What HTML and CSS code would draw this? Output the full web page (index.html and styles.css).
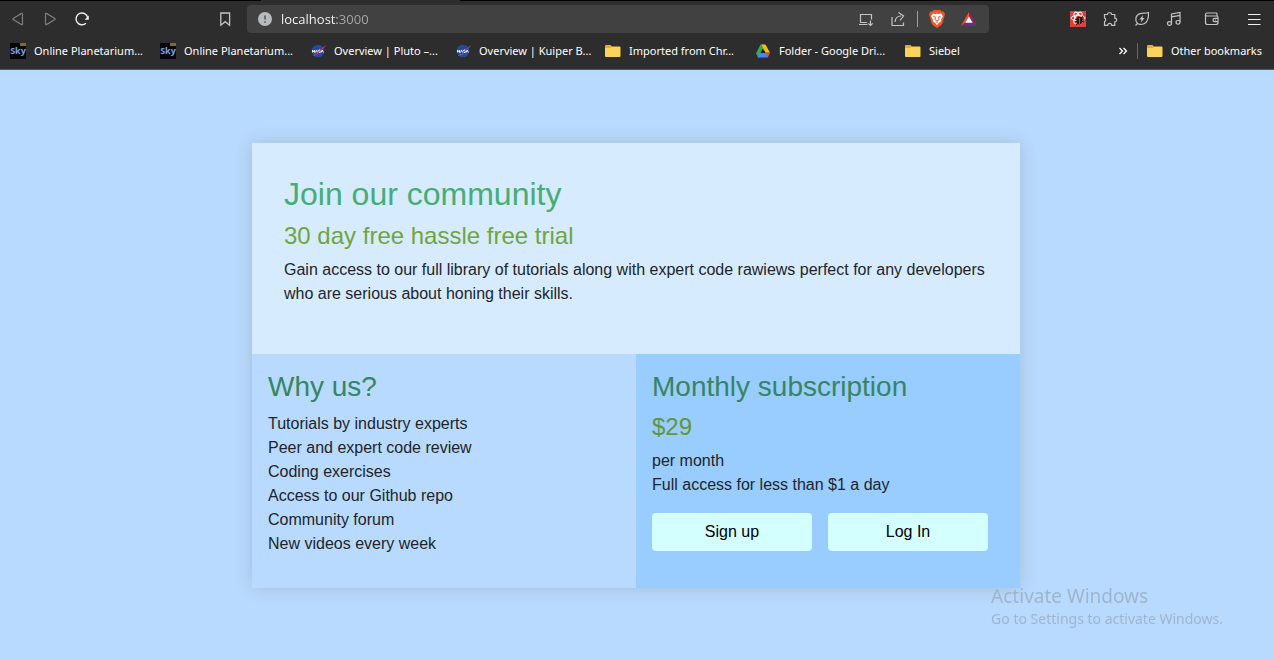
FILE: index.html
```html
<!DOCTYPE html>
<html lang="en">
<head>
<meta charset="utf-8">
<meta name="viewport" content="width=device-width, initial-scale=1">
<title>Join our community</title>
<link rel="stylesheet" href="styles.css">
</head>
<body>
<header class="browser">
  <div class="tab-edge"></div>
  <div class="toolbar">
    <button class="tool dim" aria-label="Back"><svg width="16" height="16" viewBox="0 0 16 16"><path d="M12.500 3v10q0 1-1 .6L3.200 8.600q-.8-.6 0-1.200l8.300-5q1-.4 1 .6z"/></svg></button>
    <button class="tool dim" aria-label="Forward"><svg width="16" height="16" viewBox="0 0 16 16"><path d="M3.500 3v10q0 1 1 .6l8.300-5q.8-.6 0-1.200l-8.300-5q-1-.4-1 .6z"/></svg></button>
    <button class="tool bright" aria-label="Reload"><svg width="16" height="16" viewBox="0 0 16 16"><path stroke-width="1.400" d="M12 12.200A5.900 5.900 0 1 1 13.700 6.500"/><path class="solid" d="M14.800 4.500v4.200H10.600z"/></svg></button>
    <button class="tool save" aria-label="Bookmark this page"><svg width="16" height="16" viewBox="0 0 16 16"><path stroke-width="1.300" d="M3.800 2h8.800v12.200L8.200 10.700l-4.400 3.500z"/></svg></button>
    <form class="address">
      <svg width="14" height="14" viewBox="0 0 14 14"><circle cx="7" cy="7" r="7" fill="#b9babd"/><path d="M7 3.500v4M7 9.200v1.600" stroke="#55585c" stroke-width="1.600"/></svg>
      <input class="url" type="text" value="localhost:3000" aria-label="Address">
      <button type="button" class="tool" aria-label="Install"><svg width="16" height="16" viewBox="0 0 16 16"><path d="M9 11.500H2.500V3.500h11v5M1 13.500h8.500M12.500 9.500v5M10.300 12.300l2.200 2.200 2.200-2.200"/></svg></button>
      <button type="button" class="tool" aria-label="Share"><svg width="16" height="16" viewBox="0 0 16 16"><path d="M2 6v8.500h11.500v-3M5 11c.3-4 2-6 6-6M8.500 1.500L13.500 5 10 9.500"/></svg></button>
      <span class="rule"></span>
      <button type="button" class="tool" aria-label="Brave Shields"><svg width="16" height="18" viewBox="0 0 16 18"><path fill="#f1562b" stroke="none" d="M4.700 0h6.600l1.500 1.500 1.700-.1L16 4l-.6 2.200-2 7.400Q12.500 15.500 8 18q-4.500-2.500-5.400-4.400L.6 6.200 0 4l1.500-2.600 1.700.1z"/><path fill="#fff" stroke="none" d="M4 3.500l2.500.5L8 3.500l1.500.5 2.500-.5 2 2.700-2 3.500.2 1.600-2.500 1.700L8 15.300l-1.700-2.300-2.500-1.700.2-1.600-2-3.500z"/><path fill="none" stroke="#f1562b" stroke-width="1" d="M4.200 6.300l2.500.9-.8 2.400L8 11l2.100-1.400-.8-2.400 2.500-.9M8 11v2"/></svg></button>
      <button type="button" class="tool" aria-label="Brave Rewards"><svg width="16" height="14" viewBox="0 0 16 14"><path fill="#fb542b" stroke="none" d="M8 0v5L4.500 10.500 0 14z"/><path fill="#9e1f63" stroke="none" d="M8 0l8 14-4.500-3.500L8 5z"/><path fill="#662d91" stroke="none" d="M0 14l4.500-3.500h7L16 14z"/><path fill="#fff" stroke="none" d="M8 4.500l3.700 6.200H4.300z"/></svg></button>
    </form>
    <div class="extensions">
      <button class="tool" aria-label="React extension"><svg width="16" height="16" viewBox="0 0 16 16"><path fill="#df4138" stroke="none" d="M0 0h16v16H0z"/><g fill="none" stroke="#fff" stroke-width="1"><ellipse cx="8" cy="7" rx="7" ry="2.600"/><ellipse cx="8" cy="7" rx="6.500" ry="2.600" transform="rotate(60 8 7)"/><ellipse cx="8" cy="7" rx="6.500" ry="2.600" transform="rotate(120 8 7)"/></g><ellipse cx="9.500" cy="9.500" rx="3" ry="4" fill="#2b1516" stroke="none"/><path stroke="#2b1516" d="M5 8l9 3M5 11l9-3M6 14l7-9"/><path stroke="#df4138" d="M9.500 7v6"/></svg></button>
      <button class="tool" aria-label="Extensions"><svg width="16" height="16" viewBox="0 0 16 16"><path d="M2.500 3.500h3a2 2 0 1 1 4 0h3.300v3.600a1.800 1.800 0 1 1 0 3.700v3.500H9.700a2 2 0 0 0-4 0H2.500v-3.700a2 2 0 0 0 0-3.700z"/></svg></button>
      <button class="tool" aria-label="Energy saver"><svg width="16" height="16" viewBox="0 0 16 16"><path d="M1.500 14.500l2-2C.5 9 1.500 4 6 2.700c3-.9 5.500 0 8.500-1.200.2 5-.2 9.500-4.500 11.300-2.500 1-4.700.8-6.500-.3"/><path class="solid" d="M9 4L5.500 8.500h2L7 11.500 10.500 7h-2z"/></svg></button>
      <button class="tool" aria-label="Media"><svg width="16" height="16" viewBox="0 0 16 16"><path d="M5.500 12.500V3l8.500-1.500v9.500M5.500 5.800L14 4.300"/><ellipse cx="3.500" cy="12.500" rx="2" ry="1.800"/><ellipse cx="12" cy="11.300" rx="2" ry="1.800"/></svg></button>
      <button class="tool wallet" aria-label="Wallet"><svg width="16" height="16" viewBox="0 0 16 16"><path d="M13 5V3q0-1-1-1H3Q1.500 2 1.500 3.500v8Q1.500 13.500 3.500 13.500H12q2 0 2-2v-5Q14 5 12.500 5H3Q1.500 5 1.500 3.500M14 7.300h-3.500Q9 7.300 9 9t1.500 1.700H14M11 9h1"/></svg></button>
      <button class="tool bright menu" aria-label="Menu"><svg width="16" height="16" viewBox="0 0 16 16"><path d="M2 3.500h12.500M2 8.500h12.500M2 13.500h12.500"/></svg></button>
    </div>
  </div>
  <nav class="bookmarks" aria-label="Bookmarks">
    <a class="bookmark" href="#"><span class="sky">Sky</span>Online Planetarium...</a>
    <a class="bookmark" href="#"><span class="sky">Sky</span>Online Planetarium...</a>
    <a class="bookmark short" href="#"><svg width="16" height="16" viewBox="0 0 16 16"><circle cx="8" cy="8" r="6.300" fill="#2449a0"/><path fill="none" stroke="#e8edf8" stroke-width="1" d="M2.500 9.500V7l2 2.500V7M5.500 9.500L6.500 7l1.200 2.500M10.300 7H8.700v1.200h1.500v1.300H8.500M11.200 9.500l1-2.500 1.200 2.500"/><path fill="none" stroke="#dd4050" d="M3.500 12.500Q8 12 10 7.500L15.500 3"/></svg>Overview | Pluto –...</a>
    <a class="bookmark" href="#"><svg width="16" height="16" viewBox="0 0 16 16"><circle cx="8" cy="8" r="6.300" fill="#2449a0"/><path fill="none" stroke="#e8edf8" stroke-width="1" d="M2.500 9.500V7l2 2.500V7M5.500 9.500L6.500 7l1.200 2.500M10.300 7H8.700v1.200h1.500v1.300H8.500M11.200 9.500l1-2.500 1.200 2.500"/><path fill="none" stroke="#dd4050" d="M3.500 12.500Q8 12 10 7.500L15.500 3"/></svg>Overview | Kuiper B...</a>
    <a class="bookmark" href="#"><svg width="16" height="16" viewBox="0 0 16 16"><path fill="#e3ad36" d="M0 3q0-1 1-1h4.500L7 3.500V6H0z"/><path fill="#fbd25b" d="M0 5h5.500L7 3.500h7.500q1 0 1 1V13q0 1-1 1H1q-1 0-1-1z"/></svg>Imported from Chr...</a>
    <a class="bookmark" href="#"><svg width="16" height="16" viewBox="0 0 16 16"><path fill="#34a853" d="M5.500 1.500h2.700l2.300 4L5 14.500H3.300L1 10.500z"/><path fill="#fbbc04" d="M6.500 1.500h4L15 9.700h-4.500z"/><path fill="#4285f4" d="M4.800 9.800H15l-2.300 4.700H3.300L2.500 14z"/><path fill="#ea4335" d="M10.500 9.800H15l-2.100 3.600z"/><path fill="#202020" d="M7.800 5.700l2.500 4.200H5.500z"/></svg>Folder - Google Dri...</a>
    <a class="bookmark" href="#"><svg width="16" height="16" viewBox="0 0 16 16"><path fill="#e3ad36" d="M0 3q0-1 1-1h4.500L7 3.500V6H0z"/><path fill="#fbd25b" d="M0 5h5.500L7 3.500h7.500q1 0 1 1V13q0 1-1 1H1q-1 0-1-1z"/></svg>Siebel</a>
    <button class="overflow" aria-label="More bookmarks"><svg width="10" height="8" viewBox="0 0 10 8"><path fill="none" stroke="#fff" stroke-width="1.300" d="M1.500 1l3 3-3 3M5.500 1l3 3-3 3"/></svg></button>
    <a class="bookmark other" href="#"><svg width="16" height="16" viewBox="0 0 16 16"><path fill="#e3ad36" d="M0 3q0-1 1-1h4.500L7 3.500V6H0z"/><path fill="#fbd25b" d="M0 5h5.500L7 3.500h7.500q1 0 1 1V13q0 1-1 1H1q-1 0-1-1z"/></svg>Other bookmarks</a>
  </nav>
</header>
<main class="page">
  <article class="card">
    <section class="intro">
      <h1 class="title">Join our community</h1>
      <h2 class="accent">30 day free hassle free trial</h2>
      <p class="text">Gain access to our full library of tutorials along with expert code rawiews perfect for any developers who are serious about honing their skills.</p>
    </section>
    <div class="columns">
      <section class="why">
        <h2 class="heading">Why us?</h2>
        <ul class="reasons">
          <li>Tutorials by industry experts</li>
          <li>Peer and expert code review</li>
          <li>Coding exercises</li>
          <li>Access to our Github repo</li>
          <li>Community forum</li>
          <li>New videos every week</li>
        </ul>
      </section>
      <section class="plan">
        <h2 class="heading">Monthly subscription</h2>
        <h3 class="accent price">$29</h3>
        <p class="text">per month<br>Full access for less than $1 a day</p>
        <div class="actions">
          <button class="action">Sign up</button>
          <button class="action">Log In</button>
        </div>
      </section>
    </div>
  </article>
</main>
<aside class="watermark">
  <p class="watermark-title">Activate Windows</p>
  <p class="watermark-text">Go to Settings to activate Windows.</p>
</aside>
</body>
</html>
```
FILE: styles.css
```css
* {
  box-sizing: border-box;
}

body {
  margin: 0;
  min-height: 100vh;
  background: #b8daff;
  color: #212529;
  font: 16px/24px "Liberation Sans", Arial, sans-serif;
}

h1, h2, h3, p, ul {
  margin: 0;
  padding: 0;
  font-weight: 400;
}

button {
  border: 0;
  padding: 0;
  background: none;
  color: inherit;
  font: inherit;
}

/* Browser chrome */
.browser {
  background: #2d2d2d;
  border-bottom: 1px solid #555553;
  color: #fff;
  font: 11px/16px "Noto Sans", "Open Sans", sans-serif;
}

.tab-edge {
  height: 1px;
  background: linear-gradient(90deg, #000 261px, #2d2d2d 261px, #2d2d2d 460px, #000 460px);
}

.toolbar {
  display: flex;
  align-items: center;
  padding: 4px 4px 0 2px;
}

.tool {
  display: flex;
  flex: none;
  align-items: center;
  justify-content: center;
  width: 32px;
  height: 28px;
  color: #c4c4c4;
}

.tool svg {
  fill: none;
  stroke: currentColor;
  stroke-width: 1.200;
}

.tool .solid {
  fill: currentColor;
  stroke: none;
}

.dim {
  color: #7d7d7d;
}

.bright {
  color: #f0f0f0;
}

.save {
  margin-left: 111px;
}

.address {
  display: flex;
  flex: 1;
  align-items: center;
  min-width: 0;
  height: 28px;
  margin: 0 73px 0 6px;
  padding: 0 4px 0 11px;
  border-radius: 4px;
  background: #414141;
}

.url {
  flex: 1;
  min-width: 0;
  height: 20px;
  margin-left: 9px;
  padding: 0;
  border: 0;
  background: linear-gradient(90deg, #fff 56px, #a9a9a9 56px);
  background-clip: text;
  -webkit-background-clip: text;
  color: transparent;
  font: 13px/20px "Open Sans", "Noto Sans", sans-serif;
}

.rule {
  width: 1px;
  height: 16px;
  margin: 0 3px;
  background: #a0a0a0;
}

.extensions {
  display: flex;
}

.wallet {
  margin-left: 6px;
}

.menu {
  margin-left: 10px;
}

.bookmarks {
  display: flex;
  align-items: center;
  height: 36px;
  padding: 0 12px 0 10px;
}

.bookmark {
  display: flex;
  flex: none;
  align-items: center;
  gap: 8px;
  width: 150px;
  color: #fff;
  text-decoration: none;
  white-space: nowrap;
}

.short {
  width: 145px;
}

.sky {
  width: 16px;
  height: 16px;
  background: linear-gradient(#8a6a1d, #8a6a1d) 10px 0 / 6px 3px no-repeat #06070d;
  color: #7ba0e8;
  font: 700 9px/16px "Open Sans", sans-serif;
  text-align: center;
}

.overflow {
  display: flex;
  margin-left: auto;
}

.other {
  width: auto;
  margin-left: 9px;
  padding-left: 9px;
  border-left: 1px solid #666;
}

/* Subscription card */
.page {
  padding: 73px 18px 71px 16px;
}

.card {
  max-width: 768px;
  margin: 0 auto;
  box-shadow: 0 0 16px rgba(90, 80, 50, 0.2);
}

.intro {
  padding: 32px 32px 48px;
  background: #d7ebff;
}

.title {
  margin-bottom: 8px;
  color: #46ad75;
  font-size: 32px;
  line-height: 38px;
}

.accent {
  margin-bottom: 8px;
  color: #70a53e;
  font-size: 24px;
  line-height: 29px;
}

.price {
  color: #5f9740;
}

.columns {
  display: grid;
  grid-template-columns: 1fr 1fr;
}

.why,
.plan {
  padding: 16px 16px 32px;
}

.why {
  background: #b8daff;
}

.plan {
  background: #99ccff;
}

.heading {
  margin-bottom: 8px;
  color: #378561;
  font-size: 28px;
  line-height: 34px;
}

.reasons {
  list-style: none;
}

.actions {
  display: grid;
  grid-template-columns: 1fr 1fr;
  gap: 16px;
  margin-top: 16px;
  padding-right: 16px;
}

.action {
  height: 38px;
  border-radius: 4px;
  background: #d3ffff;
  color: #000;
}

/* Activation notice over the desktop corner */
.watermark {
  position: fixed;
  right: 51px;
  bottom: 29px;
  color: #a0b5cc;
  font-family: "Noto Sans", "Open Sans", sans-serif;
}

.watermark-title {
  font-size: 19px;
  line-height: 24px;
}

.watermark-text {
  font-size: 14px;
  line-height: 22px;
}
```
